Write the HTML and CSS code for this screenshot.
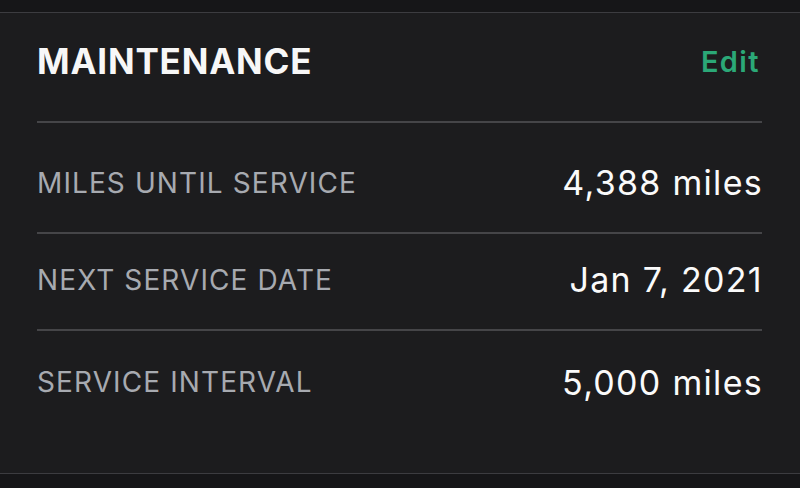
FILE: index.html
```html
<!DOCTYPE html>
<html lang="en">
<head>
    <meta charset="UTF-8">
    <meta name="viewport" content="width=device-width, initial-scale=1.0">
    <title>Maintenance</title>
    <link rel="stylesheet" href="styles.css">
</head>
<body>
    <div class="top-strip"></div>

    <div class="card">
        <div class="card-header">
            <h2>MAINTENANCE</h2>
            <a href="#" class="edit-link">Edit</a>
        </div>

        <div class="row row-first">
            <span class="label">MILES UNTIL SERVICE</span>
            <span class="value">4,388 miles</span>
        </div>
        <div class="row row-middle">
            <span class="label">NEXT SERVICE DATE</span>
            <span class="value">Jan 7, 2021</span>
        </div>
        <div class="row row-last">
            <span class="label">SERVICE INTERVAL</span>
            <span class="value">5,000 miles</span>
        </div>
    </div>

    <div class="bottom-strip"></div>
</body>
</html>
```

FILE: styles.css
```css
body {
    font-family: Inter, "Open Sans", Arial, sans-serif;
    background-color: #151517;
    margin: 0;
    height: 488px;
    overflow: hidden;
}

.top-strip {
    height: 12px;
    background-color: #161618;
}

.card {
    background-color: #1c1c1e;
    border-top: 1px solid #3c3c40;
    border-bottom: 1px solid #3c3c40;
    padding: 0 38px 0 37px;
}

.card-header {
    display: flex;
    justify-content: space-between;
    align-items: center;
    height: 110px;
    padding-bottom: 12px;
    box-sizing: border-box;
    border-bottom: 2px solid #454548;
}

.card-header h2 {
    margin: 0;
    font-size: 35px;
    font-weight: 700;
    color: #f7f7f7;
    letter-spacing: 0.8px;
}

.edit-link {
    font-size: 29px;
    font-weight: 600;
    color: #2ba877;
    text-decoration: none;
    letter-spacing: 1.4px;
    margin-right: 2px;
}

.row {
    display: flex;
    justify-content: space-between;
    align-items: center;
    box-sizing: border-box;
    border-bottom: 2px solid #454548;
}

.row-first {
    height: 111px;
    padding-top: 10px;
}

.row-middle {
    height: 97px;
    padding-bottom: 4px;
}

.row-last {
    height: 142px;
    padding-bottom: 40px;
    border-bottom: none;
}

.label {
    font-size: 28px;
    color: #a7aab0;
    letter-spacing: 1.1px;
}

.value {
    font-size: 34px;
    color: #fafafa;
    letter-spacing: 1.3px;
    margin-right: -1px;
}

.bottom-strip {
    height: 14px;
    background-color: #161618;
}
```
